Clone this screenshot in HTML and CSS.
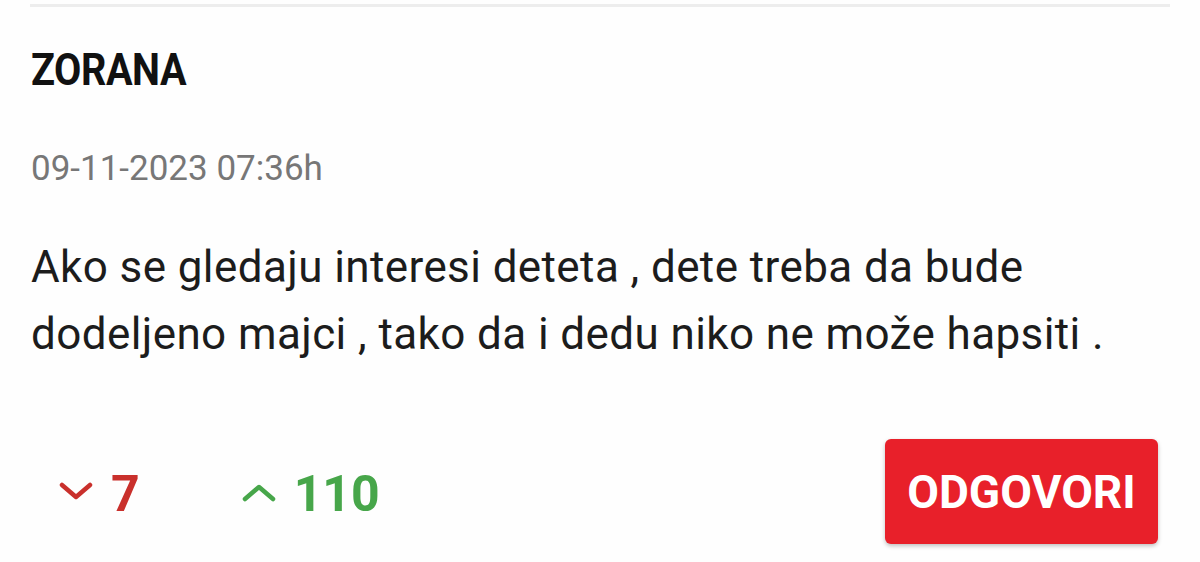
FILE: index.html
```html
<!DOCTYPE html>
<html>
<head>
<meta charset="utf-8">
<link rel="stylesheet" href="styles.css">
</head>
<body>
<div class="comment">
  <div class="name"><span class="name-text">ZORANA</span></div>
  <div class="date">09-11-2023 07:36h</div>
  <p class="text">Ako se gledaju interesi deteta , dete treba da bude dodeljeno majci , tako da i dedu niko ne može hapsiti .</p>
  <div class="actions">
    <div class="votes">
      <span class="vote down">
        <svg class="chev" width="34" height="20" viewBox="0 0 34 20"><path d="M3 4 L17 16 L31 4" fill="none" stroke="currentColor" stroke-width="4.5" stroke-linecap="round" stroke-linejoin="round"/></svg>
        <span class="count">7</span>
      </span>
      <span class="vote up">
        <svg class="chev" width="34" height="20" viewBox="0 0 34 20"><path d="M3 16 L17 4 L31 16" fill="none" stroke="currentColor" stroke-width="4.5" stroke-linecap="round" stroke-linejoin="round"/></svg>
        <span class="count">110</span>
      </span>
    </div>
    <button class="reply">ODGOVORI</button>
  </div>
</div>
</body>
</html>
```
FILE: styles.css
```css
html, body {
  margin: 0;
  padding: 0;
  background: #fefefe;
}
body {
  font-family: Roboto, "Liberation Sans", sans-serif;
  width: 1200px;
  height: 562px;
  overflow: hidden;
}
.comment {
  margin: 4px 30px 0 30px;
  border-top: 3px solid #ededed;
  padding: 0 12px 0 1px;
}
.name {
  margin-top: 38px;
  height: 50px;
  line-height: 50px;
}
.name-text {
  display: inline-block;
  font-weight: 700;
  font-size: 45px;
  color: #111;
  transform: scaleX(0.88);
  transform-origin: left center;
  letter-spacing: -0.5px;
}
.date {
  margin-top: 52px;
  font-size: 35px;
  line-height: 44px;
  color: #777;
}
.text {
  margin: 43px 0 0 0;
  font-size: 44px;
  letter-spacing: 0.4px;
  line-height: 67px;
  color: #1c1c1c;
}
.actions {
  margin-top: 71px;
  display: flex;
  align-items: center;
  justify-content: space-between;
}
.votes {
  display: flex;
  align-items: center;
  gap: 102px;
  padding-left: 28px;
  margin-top: 5px;
}
.vote {
  display: flex;
  align-items: center;
  gap: 18px;
  font-size: 50px;
  font-weight: 700;
}
.down { color: #c9302c; }
.up { color: #47a64a; }
.chev { display: block; }
.down .chev { margin-top: -6px; }
.up .chev { margin-top: -2px; }
.reply {
  width: 273px;
  height: 105px;
  border: none;
  border-radius: 6px;
  background: #e8202a;
  color: #fff;
  font-family: Roboto, "Liberation Sans", sans-serif;
  font-weight: 700;
  font-size: 46px;
  box-shadow: 0 2px 4px rgba(0,0,0,0.25);
  padding: 0;
}
```
